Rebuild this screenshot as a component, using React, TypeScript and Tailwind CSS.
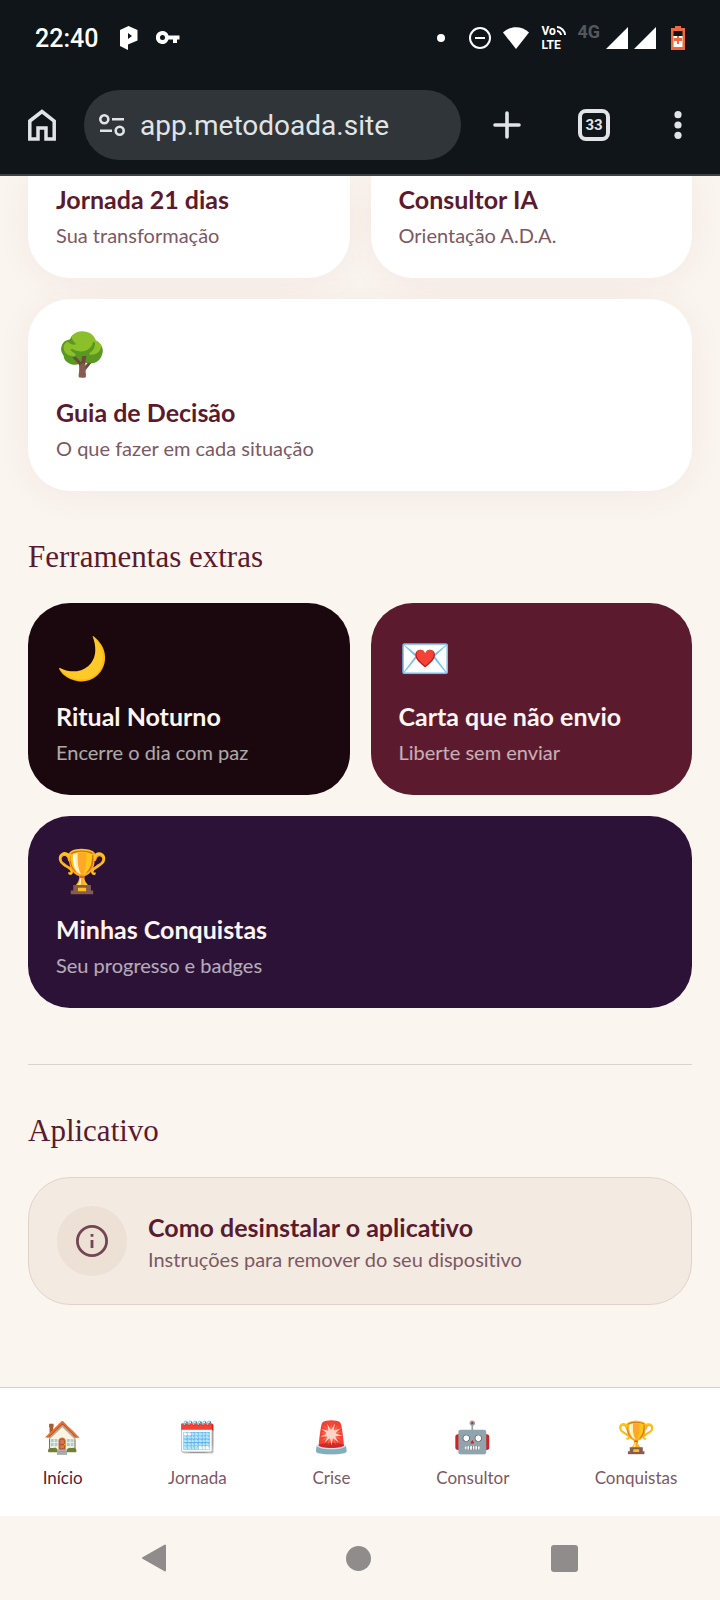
import type { ReactNode } from "react";

const cardsExtras = [
  { icono: "🌙", titulo: "Ritual Noturno", texto: "Encerre o dia com paz", clase: "bg-[#1a080e]" },
  { icono: "💌", titulo: "Carta que não envio", texto: "Liberte sem enviar", clase: "bg-[#5c1a2e]" },
  { icono: "🏆", titulo: "Minhas Conquistas", texto: "Seu progresso e badges", clase: "col-span-2 bg-[#2d1238]" },
];

const abas = [
  { icono: "🏠", nome: "Início" },
  { icono: "🗓️", nome: "Jornada" },
  { icono: "🚨", nome: "Crise" },
  { icono: "🤖", nome: "Consultor" },
  { icono: "🏆", nome: "Conquistas" },
];

function BarraStatus() {
  return (
    <div className="flex h-[76px] items-center justify-between px-[35px] text-white">
      <div className="flex items-center">
        <span className="pt-[2px] text-[25px] leading-8 font-medium">22:40</span>
        <svg className="ml-[22px] h-6 w-[18px]" viewBox="0 0 18 24" fill="currentColor">
          <path fillRule="evenodd" d="M8.500 0 17.500 4v10.500L8 18.500V24L0 20V4zM8 7v6l4-3z" />
        </svg>
        <svg className="ml-[18px] h-[14px] w-6" viewBox="0 0 24 14" fill="currentColor">
          <path fillRule="evenodd" d="M6.500 0a6.500 6.500 0 0 1 6 4.500h11v4H21v3.500h-4V8.500h-4.500A6.500 6.500 0 1 1 6.500 0zm0 4a2.500 2.500 0 1 0 0 5 2.500 2.500 0 0 0 0-5z" />
        </svg>
      </div>
      <div className="flex items-center">
        <span className="mr-6 size-2 rounded-full bg-white" />
        <svg className="mr-3 size-[22px]" viewBox="0 0 22 22" fill="none" stroke="currentColor" strokeWidth="2">
          <circle cx="11" cy="11" r="10" />
          <path d="M6 11h10" />
        </svg>
        <svg className="mr-3 h-[22px] w-[26px]" viewBox="0 0 26 22" fill="currentColor">
          <path d="M0 5.500C7-1.500 19-1.500 26 5.500L13 22z" />
        </svg>
        <span className="mr-[9px] w-[27px] text-[12px] leading-[14px] font-bold">
          <span className="flex">
            Vo
            <svg className="mt-[2px] h-[10px] w-[10px]" viewBox="0 0 10 10" fill="none" stroke="currentColor" strokeWidth="2">
              <path d="M1 1c4 0 8 4 8 8M1 5c2 0 4 2 4 4" />
            </svg>
          </span>
          <span className="block">LTE</span>
        </span>
        <span className="mb-3 mr-[6px] text-[18px] leading-5 font-bold text-[#55585b]">4G</span>
        <svg className="h-[22px] w-[50px]" viewBox="0 0 50 22" fill="currentColor">
          <path d="M22 0v22H0zM50 0v22H28z" />
        </svg>
        <svg className="ml-[15px] h-6 w-[14px]" viewBox="0 0 14 24">
          <path d="M4 0h6v2h4v22H0V2h4z" fill="#f0683f" />
          <path d="M2.500 5h9v5h-9z" fill="#0f1519" />
          <path d="M2.500 10h9v11h-9z" fill="#fff" />
          <path d="M6 10h2v2h3v3H8v3H6v-3H3v-3h3z" fill="#f0683f" />
        </svg>
      </div>
    </div>
  );
}

function BarraNavegador() {
  return (
    <div className="flex items-center border-b-2 border-[#3f4347] py-[14px] pr-[30px] pl-7 text-[#e1e4e7]">
      <button aria-label="Início" className="mr-7">
        <svg className="h-8 w-7" viewBox="0 0 28 32" fill="none" stroke="currentColor" strokeWidth="3.500">
          <path d="M1.800 12 14 2.500 26.200 12v18H18V19h-8v11H1.800z" />
        </svg>
      </button>
      <div className="flex h-[70px] min-w-0 flex-1 items-center rounded-full bg-[#2f3539] pr-4 pl-[15px]">
        <svg className="mr-[15px] h-[22px] w-[26px] shrink-0" viewBox="0 0 26 22" fill="none" stroke="currentColor" strokeWidth="2.600">
          <circle cx="5.300" cy="5.300" r="4" />
          <circle cx="20.700" cy="16.700" r="4" />
          <path d="M13 5.300h12M1 16.700h12" />
        </svg>
        <input aria-label="Endereço" defaultValue="app.metodoada.site" className="w-full min-w-0 bg-transparent pt-[2px] text-[28px] leading-9 outline-none" />
      </div>
      <button aria-label="Nova aba" className="ml-8">
        <svg className="size-7" viewBox="0 0 28 28" stroke="currentColor" strokeWidth="3.600" strokeLinecap="round">
          <path d="M14 2v24M2 14h24" />
        </svg>
      </button>
      <button aria-label="Abas abertas" className="ml-[57px] size-8 rounded-lg border-4 border-[#e1e4e7] text-[15px] leading-none font-bold">33</button>
      <button aria-label="Mais opções" className="ml-14 flex w-6 justify-center">
        <svg className="h-7 w-2" viewBox="0 0 8 28" fill="currentColor">
          <circle cx="4" cy="3.700" r="3.600" />
          <circle cx="4" cy="14" r="3.600" />
          <circle cx="4" cy="24.300" r="3.600" />
        </svg>
      </button>
    </div>
  );
}

function Titulo({ children }: { children: ReactNode }) {
  return (
    <h2 className="mt-12 mb-7 font-['Liberation_Serif',serif] text-[31px] leading-9 text-[#5c1a2e]">{children}</h2>
  );
}

function CardClaro({ icono, titulo, texto, clase }: { icono?: string; titulo: string; texto: string; clase: string }) {
  return (
    <a href="#" className={`block bg-white px-7 pb-[27px] shadow-[0_4px_35px_rgba(150,40,50,0.06)] ${clase}`}>
      {icono && <span className="mb-[15px] block text-[42px] leading-[52px]">{icono}</span>}
      <h3 className="mb-[2px] text-[25px] leading-9 font-bold text-[#5c1a2e]">{titulo}</h3>
      <p className="text-[20px] leading-8 text-[#7d5864]">{texto}</p>
    </a>
  );
}

export default function App() {
  return (
    <div className="flex min-h-screen flex-col bg-[#faf5ef] font-['Lato',sans-serif] [font-variant-ligatures:none]">
      <header className="relative z-10 bg-[#0f1519] font-['Roboto',sans-serif]">
        <BarraStatus />
        <BarraNavegador />
      </header>

      <main className="flex-1 px-7 pb-20">
        <div className="grid grid-cols-2 gap-[21px]">
          <CardClaro titulo="Jornada 21 dias" texto="Sua transformação" clase="rounded-b-[42px] pt-[5px]" />
          <CardClaro titulo="Consultor IA" texto="Orientação A.D.A." clase="rounded-b-[42px] pt-[5px]" />
          <CardClaro icono="🌳" titulo="Guia de Decisão" texto="O que fazer em cada situação" clase="col-span-2 rounded-[42px] pt-7" />
        </div>

        <Titulo>Ferramentas extras</Titulo>
        <div className="grid grid-cols-2 gap-[21px]">
          {cardsExtras.map((c) => (
            <a key={c.titulo} href="#" className={`block rounded-[42px] px-7 pt-7 pb-[27px] ${c.clase}`}>
              <span className="mb-[15px] block text-[42px] leading-[52px]">{c.icono}</span>
              <h3 className="mb-[2px] text-[25px] leading-9 font-bold text-[#fdf5f1]">{c.titulo}</h3>
              <p className="text-[20px] leading-8 text-white/65">{c.texto}</p>
            </a>
          ))}
        </div>

        <hr className="mt-14 border-[#dbd3cf]" />

        <Titulo>Aplicativo</Titulo>
        <button className="flex w-full items-center rounded-[42px] border border-[#e2d3c8] bg-[#f3eae1] p-7 text-left">
          <span className="mr-[21px] flex size-[70px] shrink-0 items-center justify-center rounded-full bg-[#ede0d5]">
            <svg className="size-8" viewBox="0 0 32 32" fill="none" stroke="#734555" strokeWidth="2.800">
              <circle cx="16" cy="16" r="14.600" />
              <path d="M16 15v8M16 9v2.800" />
            </svg>
          </span>
          <span>
            <span className="block text-[25px] leading-9 font-bold text-[#5c1a2e]">Como desinstalar o aplicativo</span>
            <span className="block text-[20px] leading-7 text-[#7d5864]">Instruções para remover do seu dispositivo</span>
          </span>
        </button>
      </main>

      <nav className="flex justify-around border-t border-[#d9cdc4] bg-white pt-7 pb-[26px]">
        {abas.map((a) => (
          <a key={a.nome} href="#" className={a.nome === "Início" ? "flex flex-col items-center text-[#5c1a2e]" : "flex flex-col items-center text-[#7d5864]"}>
            <span className="mb-[10px] text-[31px] leading-10">{a.icono}</span>
            <span className="text-[17px] leading-6">{a.nome}</span>
          </a>
        ))}
      </nav>

      <div className="flex h-[84px] items-center justify-between px-[142px] text-[#8f8c8b]">
        <button aria-label="Voltar">
          <svg className="h-7 w-6" viewBox="0 0 24 28" fill="currentColor" stroke="currentColor" strokeWidth="2" strokeLinejoin="round">
            <path d="M23 1.500v25L1 14z" />
          </svg>
        </button>
        <button aria-label="Tela inicial" className="size-[25px] rounded-full bg-current" />
        <button aria-label="Recentes" className="size-[27px] rounded-[3px] bg-current" />
      </div>
    </div>
  );
}
